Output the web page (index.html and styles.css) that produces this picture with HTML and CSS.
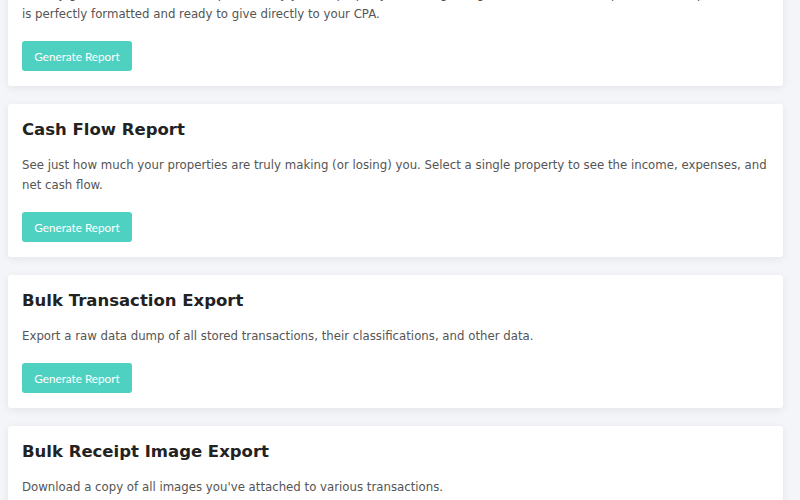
FILE: index.html
```html
<!DOCTYPE html>
<html lang="en">
<head>
<meta charset="utf-8">
<title>Reports</title>
<link rel="stylesheet" href="styles.css">
</head>
<body>
<main class="reports">
  <section class="card">
    <h2 class="card-title">Schedule E Report</h2>
    <p class="card-text">Quickly generate a Schedule E report for any year or property, including categorized income and expenses. Our report<br>is perfectly formatted and ready to give directly to your CPA.</p>
    <button class="btn">Generate Report</button>
  </section>
  <section class="card">
    <h2 class="card-title">Cash Flow Report</h2>
    <p class="card-text">See just how much your properties are truly making (or losing) you. Select a single property to see the income, expenses, and net cash flow.</p>
    <button class="btn">Generate Report</button>
  </section>
  <section class="card">
    <h2 class="card-title">Bulk Transaction Export</h2>
    <p class="card-text">Export a raw data dump of all stored transactions, their classifications, and other data.</p>
    <button class="btn">Generate Report</button>
  </section>
  <section class="card">
    <h2 class="card-title">Bulk Receipt Image Export</h2>
    <p class="card-text">Download a copy of all images you've attached to various transactions.</p>
    <button class="btn">Generate Report</button>
  </section>
</main>
</body>
</html>
```
FILE: styles.css
```css
html, body {
  margin: 0;
  padding: 0;
  background: #f4f5f8;
  height: 100%;
  overflow: hidden;
}
.reports {
  display: flex;
  flex-direction: column;
  gap: 18px;
  padding: 0 17px 0 8px;
  margin-top: -67px;
}
.card {
  background: #fff;
  border-radius: 3px;
  box-shadow: 0 2px 8px rgba(0, 0, 0, 0.07);
  padding: 14px 14px 15px;
  display: flex;
  flex-direction: column;
  align-items: flex-start;
}
.card-title {
  margin: 0;
  font-family: "DejaVu Sans", sans-serif;
  font-weight: 700;
  font-size: 16.5px;
  line-height: 24px;
  color: #222;
}
.card-text {
  margin: 13px 0 0;
  font-family: "DejaVu Sans", sans-serif;
  font-size: 11.75px;
  line-height: 20px;
  color: #555;
}
.btn {
  margin-top: 17px;
  width: 110px;
  height: 30px;
  border: none;
  border-radius: 3px;
  background: #4fd1c1;
  color: #fff;
  font-family: Lato, sans-serif;
  font-size: 11.7px;
  padding: 0;
}
```
